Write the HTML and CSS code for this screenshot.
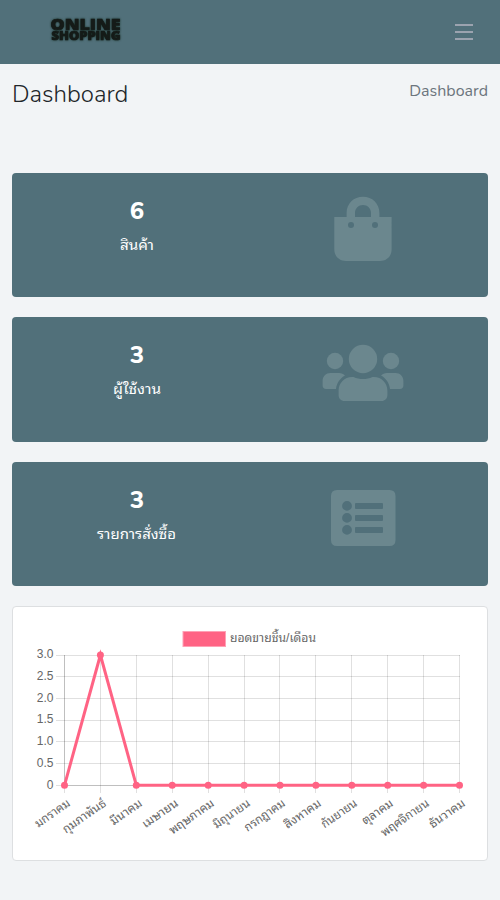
FILE: index.html
```html
<!DOCTYPE html>
<html lang="th">
<head>
<meta charset="utf-8">
<title>Dashboard</title>
<link rel="stylesheet" href="styles.css">
</head>
<body>
<header class="navbar">
  <svg class="logo" width="84" height="40" viewBox="0 0 84 40" role="img" aria-label="Online Shopping">
    <text class="logo-line logo-top" x="5.500" y="17.500" textLength="70" lengthAdjust="spacingAndGlyphs">ONLINE</text>
    <text class="logo-line logo-bottom" x="6.500" y="28" textLength="69" lengthAdjust="spacingAndGlyphs">SHOPPING</text>
  </svg>
  <div class="menu"><span></span><span></span><span></span></div>
</header>
<div class="page-head">
  <h1>Dashboard</h1>
  <div class="crumb">Dashboard</div>
</div>
<main>
  <section class="card">
    <div class="info"><strong>6</strong>
      <svg class="label" width="100" height="30"><text x="33" y="20.500" textLength="34" lengthAdjust="spacingAndGlyphs">สินค้า</text></svg></div>
    <svg class="icon" width="120" height="100" viewBox="0 0 120 100"><path fill-rule="evenodd" d="M24.3 37H36.6V33C36.6 23.5 43.800 16.800 53 16.800S69.400 23.500 69.400 33V37H81.600V69.500C81.600 76.200 76.700 81 70 81H36C29.300 81 24.300 76.200 24.300 69.500ZM45 37H61V33C61 28.300 57.500 25 53 25S45 28.300 45 33ZM41 42A3 3 0 1 0 41 48A3 3 0 1 0 41 42ZM65 42A3 3 0 1 0 65 48A3 3 0 1 0 65 42Z"/></svg>
  </section>
  <section class="card">
    <div class="info"><strong>3</strong>
      <svg class="label" width="100" height="30"><text x="26" y="21" textLength="48" lengthAdjust="spacingAndGlyphs">ผู้ใช้งาน</text></svg></div>
    <svg class="icon" width="120" height="100" viewBox="0 -1 120 100"><circle cx="25" cy="36" r="8.200"/><circle cx="81" cy="36" r="8.200"/><circle cx="53" cy="34" r="14.200"/><path d="M20.500 48H29C31.500 48 33.500 49 35 50.500C30 53.200 26.700 58 26 64H16C14 64 12.600 62.600 12.600 60.500V56C12.600 51.500 16 48 20.500 48ZM77 48H85.500C90 48 93.400 51.500 93.400 56V60.500C93.400 62.600 92 64 90 64H80C79.300 58 76 53.200 71 50.500C72.500 49 74.500 48 77 48ZM42 52H43.500C49.500 54.700 56.500 54.700 62.500 52H64C71.500 52 77.400 58 77.400 65.500V70C77.400 73.500 75 76 71.500 76H34.500C31 76 28.600 73.500 28.600 70V65.500C28.600 58 34.500 52 42 52Z"/></svg>
  </section>
  <section class="card">
    <div class="info"><strong>3</strong>
      <svg class="label" width="100" height="30"><text x="10" y="20.500" textLength="79" lengthAdjust="spacingAndGlyphs">รายการสั่งซื้อ</text></svg></div>
    <svg class="icon" width="120" height="100" viewBox="0 -1 120 100"><path fill-rule="evenodd" d="M27 20H79.500Q85.500 20 85.500 26V70Q85.500 76 79.500 76H27Q21 76 21 70V26Q21 20 27 20ZM37 31A4.900 4.900 0 1 0 37 40.800A4.900 4.900 0 1 0 37 31ZM37 43A4.900 4.900 0 1 0 37 52.800A4.900 4.900 0 1 0 37 43ZM37 55A4.900 4.900 0 1 0 37 64.800A4.900 4.900 0 1 0 37 55ZM46 33H72Q73 33 73 34V38Q73 39 72 39H46Q45 39 45 38V34Q45 33 46 33ZM46 45H72Q73 45 73 46V50Q73 51 72 51H46Q45 51 45 50V46Q45 45 46 45ZM46 57H72Q73 57 73 58V62Q73 63 72 63H46Q45 63 45 62V58Q45 57 46 57Z"/></svg>
  </section>
  <section class="chart-card">
    <svg class="chart" width="474" height="253" viewBox="13 607 474 253">
      <rect x="183" y="631.500" width="42.500" height="15" fill="#ff6384" stroke="#ffa1b5"/>
      <text x="230" y="642" textLength="86" lengthAdjust="spacingAndGlyphs">ยอดขายชิ้น/เดือน</text>
      <path class="grid" d="M56 655.500H460M56 676.500H460M56 698.500H460M56 720.500H460M56 741.500H460M56 763.500H460M100.500 655V793M136.500 655V793M172.500 655V793M208.500 655V793M244.500 655V793M279.500 655V793M315.500 655V793M351.500 655V793M387.500 655V793M423.500 655V793M459.500 655V793"/>
      <path class="axis" d="M64.500 655V785M64 785.500H460"/>
      <path class="grid" d="M64.500 786V793M56 785.500H64"/>
      <g class="values"><text x="53.500" y="658">3.0</text><text x="53.500" y="680">2.5</text><text x="53.500" y="702">2.0</text><text x="53.500" y="723">1.5</text><text x="53.500" y="745">1.0</text><text x="53.500" y="767">0.5</text><text x="53.500" y="789">0</text></g>
      <path class="series" d="M64.500 785.300L100.400 655L136.300 785.300H459.500"/>
      <g class="points"><circle cx="64.500" cy="785.300" r="3.500"/><circle cx="100.400" cy="655" r="3.500"/><circle cx="136.300" cy="785.300" r="3.500"/><circle cx="172.200" cy="785.300" r="3.500"/><circle cx="208.200" cy="785.300" r="3.500"/><circle cx="244.100" cy="785.300" r="3.500"/><circle cx="280" cy="785.300" r="3.500"/><circle cx="315.900" cy="785.300" r="3.500"/><circle cx="351.800" cy="785.300" r="3.500"/><circle cx="387.700" cy="785.300" r="3.500"/><circle cx="423.600" cy="785.300" r="3.500"/><circle cx="459.500" cy="785.300" r="3.500"/></g>
      <g class="months">
        <text transform="translate(71 805) rotate(-35)" textLength="40" lengthAdjust="spacingAndGlyphs">มกราคม</text>
        <text transform="translate(107 805) rotate(-35)" textLength="50" lengthAdjust="spacingAndGlyphs">กุมภาพันธ์</text>
        <text transform="translate(143 805) rotate(-35)" textLength="36" lengthAdjust="spacingAndGlyphs">มีนาคม</text>
        <text transform="translate(179 805) rotate(-35)" textLength="41" lengthAdjust="spacingAndGlyphs">เมษายน</text>
        <text transform="translate(215 805) rotate(-35)" textLength="52" lengthAdjust="spacingAndGlyphs">พฤษภาคม</text>
        <text transform="translate(251 805) rotate(-35)" textLength="42" lengthAdjust="spacingAndGlyphs">มิถุนายน</text>
        <text transform="translate(286 805) rotate(-35)" textLength="47" lengthAdjust="spacingAndGlyphs">กรกฎาคม</text>
        <text transform="translate(322 805) rotate(-35)" textLength="42" lengthAdjust="spacingAndGlyphs">สิงหาคม</text>
        <text transform="translate(358 805) rotate(-35)" textLength="41" lengthAdjust="spacingAndGlyphs">กันยายน</text>
        <text transform="translate(394 805) rotate(-35)" textLength="35" lengthAdjust="spacingAndGlyphs">ตุลาคม</text>
        <text transform="translate(430 805) rotate(-35)" textLength="56" lengthAdjust="spacingAndGlyphs">พฤศจิกายน</text>
        <text transform="translate(466 805) rotate(-35)" textLength="41" lengthAdjust="spacingAndGlyphs">ธันวาคม</text>
      </g>
    </svg>
  </section>
</main>
</body>
</html>
```
FILE: styles.css
```css
* { box-sizing: border-box; }
body { margin: 0; height: 900px; overflow: hidden; background: #f2f4f6; font-family: Nunito, "Open Sans", "Noto Sans Thai Looped", Loma, Waree, "Noto Sans Thai", sans-serif; color: #212529; }
svg { display: block; overflow: visible; }
.navbar { height: 64px; background: #51707a; display: flex; align-items: center; justify-content: space-between; padding: 0 27px 0 45px; }
.logo-line { font-family: "Open Sans", "Liberation Sans", sans-serif; font-weight: 800; fill: #151b18; stroke: #151b18; stroke-width: .7px; filter: drop-shadow(0 0 1px #193329); }
.logo-top { font-size: 16px; }
.logo-bottom { font-size: 11.5px; }
.menu { width: 18px; display: grid; gap: 5px; }
.menu span { height: 2px; background: #9ba3af; }
.page-head { height: 109px; padding: 12px 12px 0; display: flex; justify-content: space-between; }
h1 { margin: 0; font-size: 24px; line-height: 36px; font-weight: 300; }
.crumb { padding-top: 3px; font-size: 16px; line-height: 24px; color: #6c757d; }
main { padding: 0 12px; display: flex; flex-direction: column; gap: 20px; }
.card { height: 124.4px; border-radius: 4px; background: #51707a; display: flex; color: #fff; }
.info { width: 250px; padding-top: 20px; display: flex; flex-direction: column; align-items: center; }
.info strong { font-size: 24px; line-height: 36px; font-weight: 800; }
.label text { fill: #fff; font-size: 14px; font-weight: 400; }
.icon { margin: 7px 0 0 48px; fill: #6b878e; }
.chart-card { height: 255px; border: 1px solid #dddfe1; border-radius: 4px; background: #fff; }
.chart { font-family: "Liberation Sans", "Noto Sans Thai Looped", Loma, Waree, "Noto Sans Thai", sans-serif; font-size: 12px; }
.chart text { fill: #666; }
.grid { stroke: rgba(0, 0, 0, .12); fill: none; }
.axis { stroke: rgba(0, 0, 0, .25); fill: none; }
.series { stroke: #ff6384; stroke-width: 3px; fill: none; }
.points { fill: #ff6384; }
.values, .months { text-anchor: end; }
.months { font-size: 12px; }
```
